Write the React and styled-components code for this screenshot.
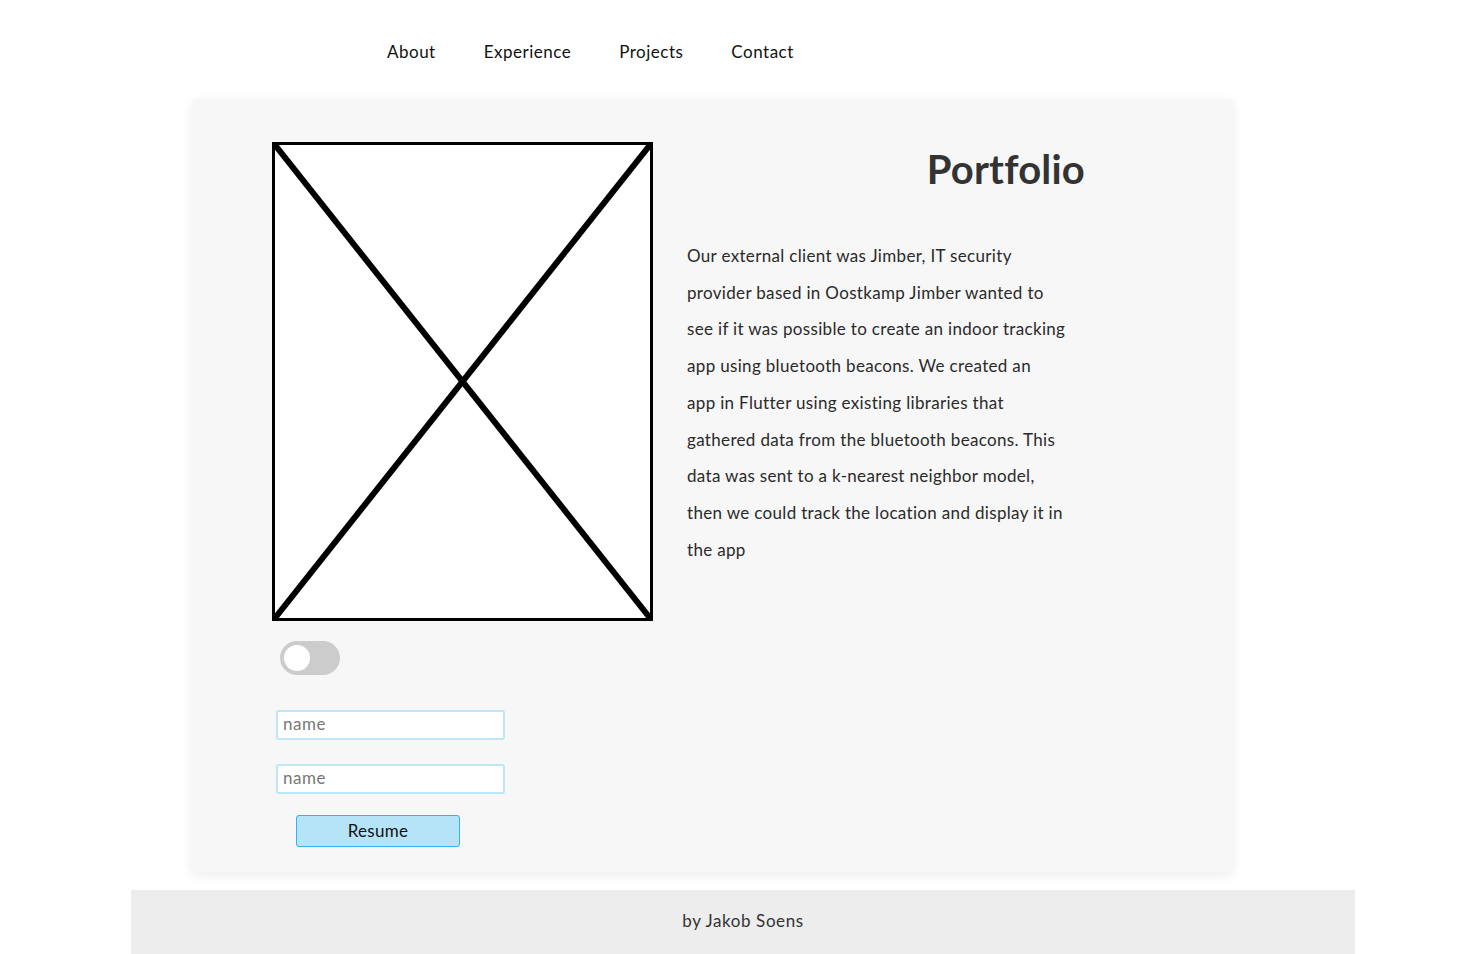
import React from "react";
import styled, { createGlobalStyle } from "styled-components";

const Global = createGlobalStyle`
  html, body { margin: 0; padding: 0; background: #fff; }
  body { font-family: Lato, "Noto Sans", sans-serif; color: #222; }
`;

const Nav = styled.nav`
  display: flex;
  align-items: center;
  height: 96px;
  padding-top: 3px;
  padding-left: 387px;
  gap: 48px;
`;

const NavLink = styled.a`
  font-size: 17px;
  color: #111;
  text-decoration: none;
  letter-spacing: 0.5px;
`;

const Card = styled.main`
  box-sizing: border-box;
  margin-left: 192px;
  width: 1041px;
  height: 773px;
  padding: 43px 80px 0 80px;
  background: #f7f7f7;
  border-radius: 4px;
  box-shadow: 0 3px 12px rgba(0, 0, 0, 0.08);
  display: flex;
  gap: 34px;
`;

const LeftCol = styled.div`
  display: flex;
  flex-direction: column;
  align-items: flex-start;
`;

const ImageBox = styled.div`
  box-sizing: border-box;
  width: 381px;
  height: 479px;
  border: 3px solid #000;
  background: #fff;
  svg { display: block; width: 100%; height: 100%; }
`;

const Toggle = styled.div`
  box-sizing: border-box;
  margin: 20px 0 0 8px;
  width: 60px;
  height: 34px;
  border-radius: 17px;
  background: #ccc;
  padding: 4px;
`;

const Knob = styled.div`
  width: 26px;
  height: 26px;
  border-radius: 50%;
  background: #fff;
`;

const Input = styled.input`
  box-sizing: border-box;
  margin: ${(p) => p.$mt}px 0 0 4px;
  width: 229px;
  height: 30px;
  border: 2px solid #bde6f8;
  border-radius: 3px;
  background: #fff;
  padding: 0 5px 3px 5px;
  font-family: Lato, "Noto Sans", sans-serif;
  font-size: 17px;
  letter-spacing: 0.5px;
  outline: none;
  &::placeholder { color: #777; }
`;

const Button = styled.button`
  box-sizing: border-box;
  margin: 21px 0 0 24px;
  width: 164px;
  height: 32px;
  background: #b5e4f9;
  border: 1px solid #33b3ef;
  border-radius: 3px;
  font-family: Lato, "Noto Sans", sans-serif;
  font-size: 17px;
  letter-spacing: 0.3px;
  color: #111;
  padding: 0 0 2px 0;
`;

const RightCol = styled.div`
  flex: 1;
  display: flex;
  flex-direction: column;
`;

const Title = styled.h1`
  margin: 2px 68px 0 0;
  text-align: right;
  font-size: 40px;
  line-height: 50px;
  font-weight: 700;
  letter-spacing: 0.2px;
  color: #333;
`;

const Body = styled.p`
  margin: 44px 0 0 0;
  font-size: 17px;
  line-height: 36.7px;
  letter-spacing: 0.33px;
  color: #2a2a2a;
`;

const Footer = styled.footer`
  margin: 18px 0 0 131px;
  width: 1224px;
  height: 64px;
  background: #ededed;
  display: flex;
  justify-content: center;
  padding-top: 20px;
  box-sizing: border-box;
  font-size: 17px;
  letter-spacing: 0.6px;
  color: #333;
`;

const lines = [
  "Our external client was Jimber, IT security",
  "provider based in Oostkamp Jimber wanted to",
  "see if it was possible to create an indoor tracking",
  "app using bluetooth beacons. We created an",
  "app in Flutter using existing libraries that",
  "gathered data from the bluetooth beacons. This",
  "data was sent to a k-nearest neighbor model,",
  "then we could track the location and display it in",
  "the app",
];

export default function App() {
  return (
    <>
      <Global />
      <Nav>
        <NavLink href="#">About</NavLink>
        <NavLink href="#">Experience</NavLink>
        <NavLink href="#">Projects</NavLink>
        <NavLink href="#">Contact</NavLink>
      </Nav>
      <Card>
        <LeftCol>
          <ImageBox>
            <svg viewBox="0 0 375 473" preserveAspectRatio="none">
              <line x1="0" y1="0" x2="375" y2="473" stroke="#000" strokeWidth="6" />
              <line x1="375" y1="0" x2="0" y2="473" stroke="#000" strokeWidth="6" />
            </svg>
          </ImageBox>
          <Toggle>
            <Knob />
          </Toggle>
          <Input $mt={35} placeholder="name" />
          <Input $mt={24} placeholder="name" />
          <Button>Resume</Button>
        </LeftCol>
        <RightCol>
          <Title>Portfolio</Title>
          <Body>
            {lines.map((l, i) => (
              <React.Fragment key={i}>
                {l}
                {i < lines.length - 1 && <br />}
              </React.Fragment>
            ))}
          </Body>
        </RightCol>
      </Card>
      <Footer>by Jakob Soens</Footer>
    </>
  );
}
